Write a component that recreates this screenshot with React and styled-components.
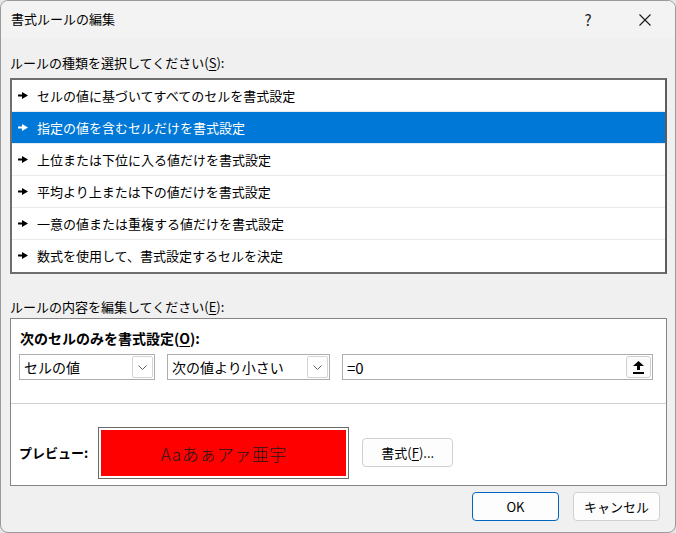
import { useState } from "react";
import styled, { createGlobalStyle } from "styled-components";

const GlobalStyle = createGlobalStyle`
  html, body {
    margin: 0;
    padding: 0;
    background: #e6e6e6;
  }
  body {
    font-family: "Noto Sans CJK JP", "Noto Sans", sans-serif;
    font-size: 13px;
    color: #000;
  }
`;

const Window = styled.div`
  box-sizing: border-box;
  width: 676px;
  height: 533px;
  border: 1px solid #9a9a9a;
  border-radius: 8px;
  background: #f0f0f0;
  overflow: hidden;
  display: flex;
  flex-direction: column;
`;

const TitleBar = styled.div`
  height: 37px;
  flex-shrink: 0;
  background: #f3f3f3;
  display: flex;
  align-items: center;
  padding-left: 10px;
  font-size: 13px;
`;

const TitleText = styled.div`
  flex: 1;
  margin-top: -2px;
`;

const TitleButton = styled.div`
  width: 46px;
  height: 37px;
  display: flex;
  align-items: center;
  justify-content: center;
  font-size: 15px;
  color: #1a1a1a;
  margin-right: ${(p) => p.$mr || 0}px;
`;

const Body = styled.div`
  flex: 1;
  display: flex;
  flex-direction: column;
  padding: 16px 8px 0 9px;
`;

const Label = styled.div`
  height: 18px;
  line-height: 18px;
  margin-top: ${(p) => p.$mt || 0}px;
  margin-bottom: ${(p) => p.$mb || 0}px;
`;

const U = styled.span`
  text-decoration: underline;
  text-underline-offset: 2px;
`;

const ListBox = styled.div`
  box-sizing: border-box;
  height: 196px;
  border: 2px solid #6e6e6e;
  border-right-color: #5c5c5c;
  background: #fff;
  display: flex;
  flex-direction: column;
`;

const ListRow = styled.div`
  box-sizing: border-box;
  height: 32px;
  flex-shrink: 0;
  display: flex;
  align-items: center;
  gap: 9px;
  padding-left: 6px;
  border-bottom: 1px solid ${(p) => (p.$last ? "transparent" : "#eaeaea")};
  background: ${(p) => (p.$selected ? "#0078d7" : "#fff")};
  color: ${(p) => (p.$selected ? "#fff" : "#000")};
  cursor: default;
`;

const EditBox = styled.div`
  box-sizing: border-box;
  height: 168px;
  border: 1px solid #858585;
  background: #fff;
  display: flex;
  flex-direction: column;
`;

const EditTop = styled.div`
  padding: 10px 13px 0 8px;
  height: 85px;
  box-sizing: border-box;
  border-bottom: 1px solid #cfcfcf;
`;

const BoldLabel = styled.div`
  font-weight: bold;
  font-size: ${(p) => p.$size || 14}px;
  line-height: 18px;
  padding-left: ${(p) => p.$pl || 0}px;
`;

const ControlRow = styled.div`
  display: flex;
  gap: 12px;
  margin-top: 7px;
`;

const Select = styled.div`
  box-sizing: border-box;
  width: ${(p) => p.$w}px;
  height: 26px;
  border: 1px solid #adadad;
  background: #fff;
  display: flex;
  align-items: center;
  padding: 1px 1px 1px 4px;
  margin-right: ${(p) => p.$mr || 0}px;
`;

const SelectText = styled.div`
  flex: 1;
  font-size: 14px;
`;

const DropButton = styled.div`
  box-sizing: border-box;
  width: 21px;
  height: 22px;
  border: 1px solid #d4d4d4;
  border-radius: 2px;
  display: flex;
  align-items: center;
  justify-content: center;
`;

const Input = styled.div`
  box-sizing: border-box;
  flex: 1;
  height: 26px;
  border: 1px solid #adadad;
  background: #fff;
  display: flex;
  align-items: center;
  padding: 1px 1px 1px 4px;
`;

const InputText = styled.div`
  flex: 1;
  font-size: 15px;
`;

const CollapseButton = styled.div`
  box-sizing: border-box;
  width: 25px;
  height: 22px;
  border: 1px solid #d0d0d0;
  border-radius: 3px;
  background: #fbfbfb;
  display: flex;
  align-items: center;
  justify-content: center;
`;

const PreviewRow = styled.div`
  display: flex;
  align-items: center;
  padding: 23px 0 0 8px;
`;

const PreviewBox = styled.div`
  box-sizing: border-box;
  width: 251px;
  height: 52px;
  border: 1px solid #6a6a6a;
  padding: 2px;
  background: #fff;
  margin-left: 10px;
`;

const PreviewFill = styled.div`
  height: 100%;
  background: #ff0000;
  display: flex;
  align-items: center;
  justify-content: center;
  font-size: 17px;
  letter-spacing: 0.5px;
  color: #1a1a1a;
  font-weight: 300;
`;

const Button = styled.button`
  box-sizing: border-box;
  width: ${(p) => p.$w || 87}px;
  height: 29px;
  border: 1px solid ${(p) => (p.$primary ? "#0067c0" : "#d0d0d0")};
  border-radius: 4px;
  background: #fdfdfd;
  font-family: inherit;
  font-size: 13px;
  color: #000;
  padding: 0;
  display: flex;
  align-items: center;
  justify-content: center;
  margin-left: ${(p) => p.$ml || 0}px;
  margin-top: ${(p) => p.$mt || 0}px;
`;

const Footer = styled.div`
  display: flex;
  justify-content: flex-end;
  gap: 14px;
  margin-top: 6px;
  padding-right: 7px;
`;

const rules = [
  "セルの値に基づいてすべてのセルを書式設定",
  "指定の値を含むセルだけを書式設定",
  "上位または下位に入る値だけを書式設定",
  "平均より上または下の値だけを書式設定",
  "一意の値または重複する値だけを書式設定",
  "数式を使用して、書式設定するセルを決定",
];

const Pointer = ({ color }) => (
  <svg width="10" height="7" viewBox="0 0 10 7">
    <polygon points="0,2.5 4,2.5 4,0 10,3.5 4,7 4,4.5 0,4.5" fill={color} />
  </svg>
);

const Chevron = () => (
  <svg width="9" height="5" viewBox="0 0 9 5">
    <polyline points="0.5,0.5 4.5,4.5 8.5,0.5" fill="none" stroke="#606060" strokeWidth="1" />
  </svg>
);

const CollapseIcon = () => (
  <svg width="11" height="13" viewBox="0 0 11 13">
    <polygon points="5.5,0 11,5 7,5 7,9 4,9 4,5 0,5" fill="#000" />
    <rect x="0" y="11" width="11" height="2" fill="#000" />
  </svg>
);

const CloseIcon = () => (
  <svg width="12" height="12" viewBox="0 0 12 12">
    <path d="M0.5 0.5L11.5 11.5M11.5 0.5L0.5 11.5" stroke="#1a1a1a" strokeWidth="1.1" />
  </svg>
);

const App = () => {
  const [selected, setSelected] = useState(1);

  return (
    <>
      <GlobalStyle />
      <Window>
        <TitleBar>
          <TitleText>書式ルールの編集</TitleText>
          <TitleButton $mr={11}>?</TitleButton>
          <TitleButton $mr={7}>
            <CloseIcon />
          </TitleButton>
        </TitleBar>

        <Body>
          <Label $mt={0} $mb={6}>
            ルールの種類を選択してください(<U>S</U>):
          </Label>
          <ListBox>
            {rules.map((r, i) => (
              <ListRow
                key={r}
                $selected={i === selected}
                $last={i === rules.length - 1}
                onClick={() => setSelected(i)}
              >
                <Pointer color={i === selected ? "#fff" : "#000"} />
                {r}
              </ListRow>
            ))}
          </ListBox>

          <Label $mt={24} $mb={2}>
            ルールの内容を編集してください(<U>E</U>):
          </Label>
          <EditBox>
            <EditTop>
              <BoldLabel $pl={1}>
                次のセルのみを書式設定(<U>O</U>):
              </BoldLabel>
              <ControlRow>
                <Select $w={136}>
                  <SelectText>セルの値</SelectText>
                  <DropButton>
                    <Chevron />
                  </DropButton>
                </Select>
                <Select $w={163}>
                  <SelectText>次の値より小さい</SelectText>
                  <DropButton>
                    <Chevron />
                  </DropButton>
                </Select>
                <Input>
                  <InputText>=0</InputText>
                  <CollapseButton>
                    <CollapseIcon />
                  </CollapseButton>
                </Input>
              </ControlRow>
            </EditTop>
            <PreviewRow>
              <BoldLabel $size={13}>プレビュー:</BoldLabel>
              <PreviewBox>
                <PreviewFill>Aaあぁアァ亜宇</PreviewFill>
              </PreviewBox>
              <Button $w={91} $ml={13} $mt={-2}>
                書式(<U>F</U>)...
              </Button>
            </PreviewRow>
          </EditBox>

          <Footer>
            <Button $primary>OK</Button>
            <Button>キャンセル</Button>
          </Footer>
        </Body>
      </Window>
    </>
  );
};

export default App;
